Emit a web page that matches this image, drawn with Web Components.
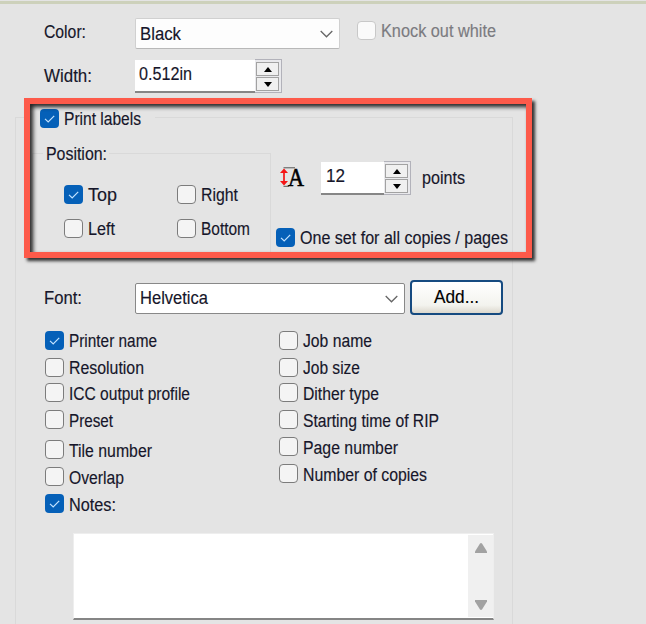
<!DOCTYPE html>
<html lang="en">
<head>
<meta charset="utf-8">
<title>Print labels</title>
<style>
body { margin: 0; background: #e4e4e4; }
</style>
</head>
<body>
<label-settings></label-settings>
<script>
const define = (name, html, setup) => {
  const template = document.createElement('template');
  template.innerHTML = html;
  customElements.define(name, class extends HTMLElement {
    constructor() {
      super();
      this.attachShadow({ mode: 'open' }).append(template.content.cloneNode(true));
    }
    connectedCallback() { if (setup) setup(this, this.shadowRoot); }
  });
};

/* Text condensed or widened to the advance given in "w". */
define('ui-text', `
<style>
:host { display: inline-block; flex: none; height: 20px; }
span { display: inline-block; white-space: pre; line-height: 20px; transform-origin: 0 0; -webkit-text-stroke: .15px currentColor; }
</style><span></span>`, (el, root) => {
  const span = root.querySelector('span');
  span.textContent = el.getAttribute('t');
  const w = parseFloat(el.getAttribute('w'));
  el.style.width = w + 'px';
  span.style.transform = 'scaleX(' + (w / span.getBoundingClientRect().width) + ')';
});

define('ui-check', `
<style>
:host { display: flex; align-items: center; height: 20px; gap: 5px; }
i { box-sizing: border-box; flex: none; width: 19px; height: 19px; border: 1.5px solid #7c7c7c; border-radius: 4px; background: #f4f4f4; display: flex; }
svg { display: none; width: 19px; height: 19px; flex: none; }
:host([checked]) i { border: 0; background: #0560b8; }
:host([checked]) svg { display: block; }
:host([disabled]) { color: #7b7b80; }
:host([disabled]) i { border-color: #c8c8c8; background: #fafafa; }
ui-text { padding-top: 2px; }
</style>
<i><svg viewBox="0 0 19 19"><path d="M5 9.8 8.2 13 14.2 6.8" fill="none" stroke="#c3e3ff" stroke-width="1.2"/></svg></i>`, (el, root) => {
  const t = document.createElement('ui-text');
  t.setAttribute('t', el.getAttribute('label'));
  t.setAttribute('w', el.getAttribute('w'));
  root.append(t);
});

define('ui-select', `
<style>
:host { display: flex; box-sizing: border-box; align-items: center; justify-content: space-between; background: #fdfdfd; border: 1px solid #d0d0d0; border-bottom-color: #b8b8b8; border-radius: 2px; padding: 0 6px 0 4px; }
:host([strong]) { border: 1px solid #888; background: #fff; }
</style>
<slot></slot>
<svg width="13" height="8" viewBox="0 0 13 8"><path d="M.7 1 6.5 6.8 12.3 1" fill="none" stroke="#666" stroke-width="1.3"/></svg>`);

define('ui-spin', `
<style>
:host { display: flex; box-sizing: border-box; height: 34px; }
.field { flex: 1; box-sizing: border-box; height: 33px; margin-top: 1px; padding: 4px 0 0 4px; background: #fff; border-bottom: 2px solid #868686; }
.keys { box-sizing: border-box; width: 27px; height: 34px; border: solid #b2b2ba; border-width: 1px 1.5px 1.5px 0; padding: 2px 2px 1px 1px; display: flex; flex-direction: column; gap: 1px; background: #e9e9ec; }
.keys b { flex: 1; width: 23px; box-sizing: border-box; border: 1px solid #a2a2a2; background: #f0f0f0; display: flex; align-items: center; justify-content: center; }
</style>
<div class="field"><slot></slot></div>
<div class="keys">
<b><svg width="8" height="5"><path d="M0 5 4 0 8 5z"/></svg></b>
<b><svg width="8" height="5"><path d="M0 0 4 5 8 0z"/></svg></b>
</div>`);

/* Group box: the top rule runs level with the caption. */
define('ui-group', `
<style>
:host { display: block; box-sizing: border-box; --c: #d9d9d9;
  background: linear-gradient(var(--c),var(--c)) 0 9px / 1px 100% no-repeat, linear-gradient(var(--c),var(--c)) 100% 9px / 1px 100% no-repeat; }
header { display: flex; height: 20px; }
header::before, header::after { content: ""; height: 1px; margin-top: 9px; background: var(--c); }
header::before { width: var(--lead); margin-right: var(--before); }
header::after { flex: 1; margin-left: var(--after); }
</style>
<header><slot name="caption"></slot></header><slot></slot>`);

define('ui-button', `
<style>
:host { display: flex; box-sizing: border-box; align-items: center; justify-content: center; border: 2px solid #154a80; border-radius: 4px; background: linear-gradient(#fff, #f3f3ee 75%, #dcd8cd); }
</style><slot></slot>`);

define('ui-notes', `
<style>
:host { display: flex; box-sizing: border-box; justify-content: flex-end; background: #fff; border: 1px solid #eee; border-bottom: 2px solid #858585; }
.bar { width: 25px; margin: 1px 0; background: #f0f0f0; display: flex; flex-direction: column; align-items: center; justify-content: space-between; padding: 8px 0 7px; box-sizing: border-box; }
</style>
<div class="bar">
<svg width="12" height="10"><path d="M5 .5Q6-.3 7 .5L12 8.5V10H0V8.5z" fill="#a2a2a2"/></svg>
<svg width="12" height="10"><path d="M5 9.5Q6 10.3 7 9.5L12 1.5V0H0V1.5z" fill="#a2a2a2"/></svg>
</div>`);

define('ui-height-icon', `
<style>:host { display: block; width: 25px; height: 34px; font: 26px/30px "Liberation Serif", serif; }
svg { display: block; }</style>
<svg width="25" height="34" viewBox="0 -6 25 34">
<path d="M3.5 .8H15M3.5 19.3H9" fill="none" stroke="#555" stroke-width="1"/>
<path d="M4 4V16" stroke="#f51414" stroke-width="1.7"/>
<path d="M0 6 4 1.5 8 6zM0 14 4 18.5 8 14z" fill="#f51414"/>
<text x="8" y="18.5" textLength="16" lengthAdjust="spacingAndGlyphs" fill="#000" stroke="#000" stroke-width=".6">A</text>
</svg>`);

define('label-settings', `
<style>
:host { display: block; position: relative; box-sizing: border-box; width: 646px; height: 624px; overflow: hidden; background: #e4e4e4; color: #16162a; font: 17.5px "Liberation Sans", Arial, sans-serif; }
.edge { height: 3px; margin-top: 1px; background: #cdd1bb; }
.row { display: flex; }
.top { height: 104px; box-sizing: border-box; padding: 14px 0 0 44px; }
.top > .row { height: 41px; }
.label { width: 91px; }
.outer { margin-left: 15px; width: 498px; height: 516px; --lead: 9px; --before: 16px; --after: 14px; }
.upper { height: 153px; box-sizing: border-box; padding: 16px 0 0 17px; }
.position { width: 239px; height: 109px; --lead: 11px; --before: 3px; --after: 2px; }
.grid { display: grid; grid-template-columns: 113px 100px; row-gap: 14px; padding: 20px 0 0 32px; }
.side { padding: 17px 0 0 5px; }
.size { height: 66px; }
.font { height: 49px; padding-left: 29px; }
.lists { display: flex; padding-left: 30px; height: 203px; }
.lists > div { width: 234px; display: flex; flex-direction: column; gap: 7px; }
.lists ui-check:nth-child(3) { margin-top: -1.5px; }
.lists .gap { margin-top: 3px; }
ui-notes { margin-left: 58px; width: 421px; height: 87px; }
.callout { position: absolute; left: 24px; top: 98px; width: 508px; height: 160px; box-sizing: border-box; border: 6px solid #fd5a4a; box-shadow: 3px 3px 3px #333, inset 3px 3px 4px #222; pointer-events: none; }
</style>
<div class="edge"></div>
<div class="top">
  <div class="row">
    <div class="label" style="padding-top:4px"><ui-text t="Color:" w="42"></ui-text></div>
    <ui-select style="width:205px;height:31px"><ui-text t="Black" w="41"></ui-text></ui-select>
    <ui-check disabled label="Knock out white" w="115" style="margin:2px 0 0 17px"></ui-check>
  </div>
  <div class="row">
    <div class="label" style="padding-top:7px"><ui-text t="Width:" w="48"></ui-text></div>
    <ui-spin style="width:147px"><ui-text t="0.512in" w="53" style="margin-top:-1px"></ui-text></ui-spin>
  </div>
</div>
<ui-group class="outer">
  <ui-check slot="caption" checked label="Print labels" w="77"></ui-check>
  <div class="upper row">
    <ui-group class="position">
      <ui-text slot="caption" t="Position:" w="61"></ui-text>
      <div class="grid">
        <ui-check checked label="Top" w="29"></ui-check><ui-check label="Right" w="37"></ui-check>
        <ui-check label="Left" w="27"></ui-check><ui-check label="Bottom" w="49"></ui-check>
      </div>
    </ui-group>
    <div class="side">
      <div class="row size">
        <ui-height-icon style="margin:0 16px 0 4px"></ui-height-icon>
        <ui-spin style="width:90px"><ui-text t="12" w="19" style="margin-left:1px"></ui-text></ui-spin>
        <ui-text t="points" w="43" style="margin:7px 0 0 11px"></ui-text>
      </div>
      <ui-check checked label="One set for all copies / pages" w="208"></ui-check>
    </div>
  </div>
  <div class="row font">
    <div class="label" style="padding-top:7px"><ui-text t="Font:" w="38"></ui-text></div>
    <ui-select strong style="width:270px;height:31px;margin-top:2px"><ui-text t="Helvetica" w="68" style="margin-top:-1px"></ui-text></ui-select>
    <ui-button style="width:93px;height:35px;margin:-1px 0 0 4.5px"><ui-text t="Add..." w="45" style="color:#000;margin-top:-2px"></ui-text></ui-button>
  </div>
  <div class="lists">
    <div>
      <ui-check checked label="Printer name" w="88"></ui-check>
      <ui-check label="Resolution" w="75"></ui-check>
      <ui-check label="ICC output profile" w="121"></ui-check>
      <ui-check label="Preset" w="44"></ui-check>
      <ui-check class="gap" label="Tile number" w="83"></ui-check>
      <ui-check label="Overlap" w="55"></ui-check>
      <ui-check checked label="Notes:" w="47"></ui-check>
    </div>
    <div>
      <ui-check label="Job name" w="69"></ui-check>
      <ui-check label="Job size" w="57"></ui-check>
      <ui-check label="Dither type" w="76"></ui-check>
      <ui-check label="Starting time of RIP" w="136"></ui-check>
      <ui-check label="Page number" w="95"></ui-check>
      <ui-check label="Number of copies" w="124"></ui-check>
    </div>
  </div>
  <ui-notes></ui-notes>
</ui-group>
<div class="callout"></div>`);
</script>
</body>
</html>
